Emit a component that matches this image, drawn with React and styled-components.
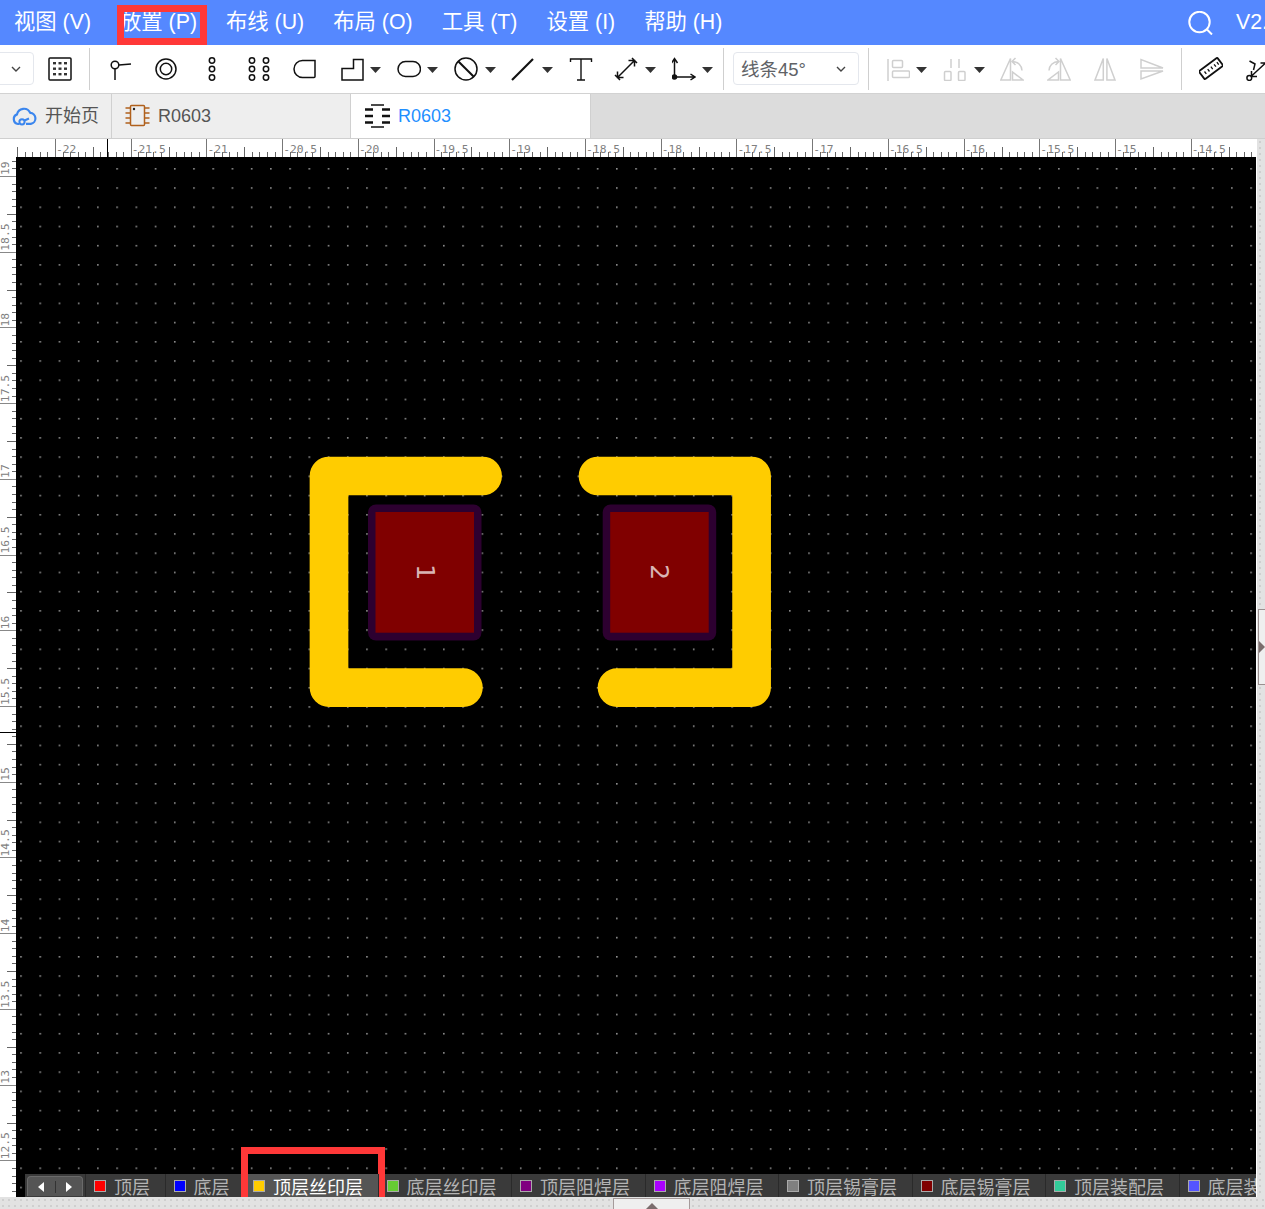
import React from 'react';
import styled, { createGlobalStyle } from 'styled-components';

const GlobalStyle = createGlobalStyle`
  html, body {
    margin: 0;
    padding: 0;
    background: #fff;
  }
  * {
    box-sizing: border-box;
  }
`;

const FONT = `"Liberation Sans", "Noto Sans CJK SC", sans-serif`;
const HIGHLIGHT = '#ff3838';

const Page = styled.div`
  width: 1265px;
  height: 1209px;
  display: flex;
  flex-direction: column;
  overflow: hidden;
  font-family: ${FONT};
`;

/* top menu */
const MenuBar = styled.div`
  height: 45px;
  flex: none;
  display: flex;
  align-items: center;
  gap: 29px;
  padding-left: 14px;
  background: #5588ff;
  color: #fff;
  font-size: 21.33px;
  overflow: hidden;
`;

const MenuItem = styled.div`
  position: relative;
  height: 45px;
  line-height: 44px;
  white-space: nowrap;

  ${(p) =>
    p.$marked &&
    `
    &::after {
      content: '';
      position: absolute;
      left: -3px;
      right: -10px;
      top: 5px;
      bottom: 0;
      border: 7px solid ${HIGHLIGHT};
    }
  `}
`;

const MenuRight = styled.div`
  margin-left: auto;
  width: 77px;
  flex: none;
  display: flex;
  align-items: center;
  gap: 22px;
  white-space: nowrap;
`;

const SearchIcon = styled.svg`
  width: 26px;
  height: 24px;
  flex: none;
  fill: none;
  stroke: #fff;
  stroke-width: 2;
`;

/* toolbar */
const Toolbar = styled.div`
  height: 49px;
  flex: none;
  display: flex;
  align-items: center;
  padding-bottom: 1px;
  border-bottom: 1px solid #d2d2d2;
  background: #fff;
  overflow: hidden;
`;

const Select = styled.div`
  flex: none;
  width: ${(p) => p.$width}px;
  height: 33px;
  margin-left: ${(p) => p.$gap}px;
  padding: 0 11px 0 7px;
  display: flex;
  align-items: center;
  justify-content: space-between;
  border: 1px solid #e4e7ed;
  border-radius: 4px;
  color: #606266;
  font-size: 18.5px;
  line-height: 1;
`;

const SelectText = styled.span`
  padding-top: 4px;
`;

const Chevron = styled.svg`
  width: 12px;
  height: 12px;
  flex: none;
  fill: none;
  stroke: #444;
  stroke-width: 1.4;
`;

const Sep = styled.div`
  flex: none;
  width: 1px;
  height: 42px;
  margin-left: ${(p) => p.$gap}px;
  background: #cfcfcf;
`;

const Tool = styled.svg`
  flex: none;
  width: 24px;
  height: 24px;
  margin-left: ${(p) => p.$gap}px;
  fill: none;
  stroke: ${(p) => (p.$off ? '#cfcfcf' : '#111')};
  stroke-width: 1.5;
  overflow: hidden;
`;

const Caret = styled.div`
  flex: none;
  width: 11px;
  height: 6px;
  margin-left: ${(p) => p.$gap}px;
  margin-top: 3px;
  background: #333;
  clip-path: polygon(0 0, 100% 0, 50% 100%);
`;

/* document tabs */
const TabBar = styled.div`
  height: 45px;
  flex: none;
  display: flex;
  border-bottom: 1px solid #cfcfcf;
  background: #dcdcdc;
`;

const Tab = styled.div`
  width: ${(p) => p.$width}px;
  flex: none;
  display: flex;
  align-items: center;
  gap: 8px;
  padding-left: ${(p) => p.$pad}px;
  border-right: 1px solid #d0d0d0;
  background: ${(p) => (p.$active ? '#fff' : '#eeeeee')};
  color: ${(p) => (p.$active ? '#1f8fff' : '#555')};
  font-size: 18px;
  line-height: 1;
`;

const TabIcon = styled.svg`
  flex: none;
  width: 25px;
  height: 24px;
  fill: none;
`;

/* editor area */
const Editor = styled.div`
  flex: 1;
  min-height: 0;
  display: flex;
`;

const EditorMain = styled.div`
  width: 1256px;
  flex: none;
  display: flex;
  flex-direction: column;
`;

const HRuler = styled.svg`
  display: block;
  flex: none;
  width: 1256px;
  height: 18px;
  background: #fff;
`;

const EditorBody = styled.div`
  flex: 1;
  min-height: 0;
  display: flex;
`;

const VRuler = styled.svg`
  display: block;
  flex: none;
  width: 16px;
  height: 1040px;
  background: #fff;
`;

const RulerLabel = styled.text`
  font-family: "DejaVu Sans Mono", monospace;
  font-size: 11.3px;
  fill: #808080;
`;

const CanvasWrap = styled.div`
  position: relative;
  flex: 1;
  min-width: 0;
  background: #000;
`;

const Board = styled.svg`
  display: block;
  width: 1240px;
  height: 1040px;
`;

const PadLabel = styled.text`
  font-family: "DejaVu Sans", sans-serif;
  font-size: 25.5px;
  fill: #d9b4b4;
`;

const dotted = `
  background-color: #e2e2e2;
  background-image: radial-gradient(#cfcfcf 1px, transparent 1.2px);
  background-size: 6px 6px;
`;

const SideStrip = styled.div`
  position: relative;
  flex: none;
  width: 9px;
  border-left: 1px solid #fff;
  ${dotted}
`;

const SideHandle = styled.div`
  position: absolute;
  left: 1px;
  right: 0;
  top: 470px;
  height: 76px;
  display: flex;
  align-items: center;
  background: #efefef;
  border: 1px solid #9a8f8f;
  border-right: none;

  &::after {
    content: '';
    border-top: 6px solid transparent;
    border-bottom: 6px solid transparent;
    border-left: 6px solid #7b6d6d;
  }
`;

const BottomStrip = styled.div`
  position: relative;
  height: 12px;
  flex: none;
  ${dotted}
`;

const BottomHandle = styled.div`
  position: absolute;
  left: 613px;
  top: 1px;
  width: 77px;
  height: 11px;
  display: flex;
  align-items: flex-end;
  justify-content: center;
  background: #efefef;
  border: 1px solid #a59b9b;
  border-bottom: none;

  &::after {
    content: '';
    border-left: 6px solid transparent;
    border-right: 6px solid transparent;
    border-bottom: 6px solid #7b6d6d;
  }
`;

/* layer tabs lie over the canvas */
const LayerBar = styled.div`
  position: absolute;
  left: 9px;
  right: 0;
  bottom: 0;
  height: 23px;
  display: flex;
  background: #3a3a3a;
`;

const LayerNav = styled.div`
  flex: none;
  width: 56px;
  height: 20px;
  margin: 2px 2px 0 2px;
  display: flex;
  align-items: center;
  background: #555;
  border: 1px solid #6a6a6a;
  border-bottom: none;
  border-radius: 4px 4px 0 0;
`;

const NavButton = styled.div`
  flex: 1;
  height: 12px;
  display: flex;
  align-items: center;
  justify-content: center;
  border-left: ${(p) => (p.$divider ? '1px solid #333' : 'none')};

  &::after {
    content: '';
    border-top: 5px solid transparent;
    border-bottom: 5px solid transparent;
    ${(p) => (p.$right ? 'border-left: 6px solid #fff;' : 'border-right: 6px solid #fff;')}
  }
`;

const LayerTab = styled.div`
  position: relative;
  flex: ${(p) => (p.$clip ? '1 1 0' : 'none')};
  min-width: 0;
  display: flex;
  align-items: center;
  gap: 8px;
  padding: 0 14.5px 0 8px;
  border-left: 1px solid ${(p) => (p.$active ? '#555' : '#2a2a2a')};
  background: ${(p) => (p.$active ? '#555' : 'transparent')};
  color: ${(p) => (p.$active ? '#fff' : '#b4b4b4')};
  font-size: 18px;
  white-space: nowrap;
  overflow: ${(p) => (p.$clip ? 'hidden' : 'visible')};

  ${(p) =>
    p.$active &&
    `
    &::before {
      content: '';
      position: absolute;
      left: 3px;
      right: 0;
      bottom: -2px;
      height: 2px;
      background: #bdbdbd;
    }
    &::after {
      content: '';
      position: absolute;
      left: -4px;
      right: -7px;
      top: -27px;
      bottom: -9px;
      border: 7px solid ${HIGHLIGHT};
    }
  `}
`;

const Swatch = styled.span`
  flex: none;
  width: 12px;
  height: 12px;
  border: 1px solid #aaa;
  background: ${(p) => p.$color};
`;

const MENU = ['视图 (V)', '放置 (P)', '布线 (U)', '布局 (O)', '工具 (T)', '设置 (I)', '帮助 (H)'];

const LAYERS = [
  ['顶层', '#ff0000'],
  ['底层', '#0000ff'],
  ['顶层丝印层', '#ffcc00', true],
  ['底层丝印层', '#66cc33'],
  ['顶层阻焊层', '#800080'],
  ['底层阻焊层', '#aa00ff'],
  ['顶层锡膏层', '#808080'],
  ['底层锡膏层', '#800000'],
  ['顶层装配层', '#33cc99'],
  ['底层装配层', '#5555ff'],
];

const gridDots = [5, 10.5, 16].flatMap((y) =>
  [5, 10.5, 16].map((x) => <rect key={`${x}-${y}`} x={x} y={y} width="3" height="2.4" fill="#333" stroke="none" />),
);

const TOOLS_LEFT = [
  { gap: 18, body: <><circle cx="7" cy="8" r="3.8" /><path d="M7 12V23M11 8L23 7" /></> },
  { gap: 22, body: <><circle cx="12" cy="12" r="10" /><circle cx="12" cy="12" r="5.7" /></> },
  { gap: 22, body: <><circle cx="12" cy="3.5" r="2.7" /><circle cx="12" cy="12" r="2.7" /><circle cx="12" cy="20.5" r="2.7" /></> },
  {
    gap: 23,
    body: (
      <>
        <circle cx="5" cy="3.5" r="2.7" /><circle cx="5" cy="12" r="2.7" /><circle cx="5" cy="20.5" r="2.7" />
        <circle cx="19" cy="3.5" r="2.7" /><circle cx="19" cy="12" r="2.7" /><circle cx="19" cy="20.5" r="2.7" />
      </>
    ),
  },
  { gap: 22, body: <path d="M22 3.5V19.5a1 1 0 0 1-1 1H9.5a8.5 8.5 0 0 1 0-17z" /> },
  { gap: 23, caret: 6, body: <path d="M13.5 2.5H23V23H2V11.5H13.5z" /> },
  { gap: 16, caret: 6, body: <rect x="1" y="4.5" width="22.5" height="15" rx="7.5" /> },
  { gap: 16, caret: 7, body: <><circle cx="12" cy="12" r="11" /><path d="M4.2 4.2L19.8 19.8" strokeWidth="2" /></> },
  { gap: 15, caret: 7, body: <path d="M1 23L22 2" strokeWidth="2.2" /> },
  { gap: 16, body: <path d="M1.5 5V2H22.5V5M12 2V23M8 23H16" strokeWidth="1.4" /> },
  {
    gap: 21,
    caret: 7,
    body: <path d="M3.5 20.5L20.5 3.5M3.5 14.5V20.5H9.5M14.5 3.5H20.5V9.5M1 18L6 23M18 1L23 6" strokeWidth="1.5" />,
  },
  {
    gap: 16,
    caret: 6,
    body: (
      <>
        <path d="M2.5 20V1.5M-0.5 6L2.5 1.5L5.5 6M2.5 20H23M18.5 17L23 20L18.5 23" strokeWidth="1.5" />
        <circle cx="2.5" cy="20" r="2" fill="#111" />
      </>
    ),
  },
];

const triangleFlip = (
  <>
    <path d="M0.8 23H10.5V1.5z" />
    <path d="M12.5 23H23L12.5 15z" />
    <path d="M12.5 4.5C18 4.5 22 9 22 13.5M15.5 1L12 4.5L15.5 8" />
  </>
);

const TOOLS_RIGHT = [
  {
    gap: 17,
    caret: 6,
    body: <><path d="M2 2V24" /><rect x="6.5" y="3.5" width="10" height="7" rx="1" /><rect x="6.5" y="14" width="17" height="6.5" rx="1" /></>,
  },
  {
    gap: 16,
    caret: 7,
    body: <><path d="M8 2V11M16 2V11" /><rect x="1.5" y="14.5" width="6.5" height="9" rx="1" /><rect x="15.5" y="14.5" width="6.5" height="9" rx="1" /></>,
  },
  { gap: 15, body: triangleFlip },
  { gap: 23, body: <g transform="matrix(-1 0 0 1 24 0)">{triangleFlip}</g> },
  { gap: 22, body: <path d="M2 23H10.3V1.5zM13.9 1.5V23H22z" /> },
  { gap: 23, body: <path d="M1 2.5V11H23zM1 14H23L1 22z" /> },
];

const RULER_STEP = 7.572;
const H_TICKS = Array.from({ length: 165 }, (_, k) => k - 5);
const V_TICKS = Array.from({ length: 139 }, (_, k) => k - 2);

const tickSize = (i, major, medium, small) => {
  if (i % 10 === 0) return major;
  if (i % 5 === 0) return medium;
  return small;
};

const Rect = styled.rect`
  fill: ${(p) => p.$fill};
`;

const HRulerView = () => (
  <HRuler shapeRendering="crispEdges">
    {H_TICKS.map((i) => {
      const x = Math.round(55 + i * RULER_STEP);
      const len = tickSize(i, 18, 10, 5);
      return <Rect key={i} x={x} y={18 - len} width="1" height={len} $fill={i % 10 === 0 ? '#777' : '#666'} />;
    })}
    {H_TICKS.filter((i) => i >= 0 && i % 10 === 0).map((i) => (
      <RulerLabel key={i} x={55 + i * RULER_STEP + 1} y="14" shapeRendering="auto">
        {-22 + i / 20}
      </RulerLabel>
    ))}
    <Rect x="107" y="0" width="1" height="18" $fill="#000" />
  </HRuler>
);

const VRulerView = () => (
  <VRuler shapeRendering="crispEdges">
    {V_TICKS.map((i) => {
      const y = Math.round(19 + i * RULER_STEP);
      const len = tickSize(i, 16, 9, 4);
      return <Rect key={i} x={16 - len} y={y} width={len} height="1" $fill={i % 10 === 0 ? '#888' : '#666'} />;
    })}
    {V_TICKS.filter((i) => i >= 0 && i % 10 === 0).map((i) => (
      <RulerLabel key={i} transform={`translate(8.5 ${19 + i * RULER_STEP - 1}) rotate(-90)`} shapeRendering="auto">
        {19 - i / 20}
      </RulerLabel>
    ))}
    <Rect x="0" y="575" width="16" height="1" $fill="#000" />
  </VRuler>
);

const Pad = ({ x, label }) => (
  <>
    <rect x={x} y="504.5" width="113.5" height="136" rx="8" fill="#2d0030" />
    <rect x={x + 7.5} y="512" width="98.5" height="120.7" fill="#800000" />
    <PadLabel transform={`translate(${x + 48.5} 572) rotate(90)`} textAnchor="middle">
      {label}
    </PadLabel>
  </>
);

const BoardView = () => (
  <Board viewBox="16 157 1240 1040">
    <defs>
      <pattern id="grid" x="20.2" y="168" width="19.22" height="19.22" patternUnits="userSpaceOnUse">
        <rect width="1.6" height="1.6" fill="#909090" />
      </pattern>
    </defs>
    <rect x="16" y="157" width="1240" height="1040" fill="url(#grid)" />
    <g fill="none" stroke="#ffcc00" strokeWidth="38.7" strokeLinecap="round" strokeLinejoin="round">
      <path d="M482.6 476H329V687.6H463.4" />
      <path d="M598 476H751.6V687.6H617" />
    </g>
    <Pad x={368} label="1" />
    <Pad x={602.7} label="2" />
  </Board>
);

const renderTool = (t, key) => (
  <React.Fragment key={key}>
    <Tool viewBox="0 0 24 24" $gap={t.gap} $off={t.off}>
      {t.body}
    </Tool>
    {t.caret !== undefined && <Caret $gap={t.caret} />}
  </React.Fragment>
);

const ChevronDown = () => (
  <Chevron viewBox="0 0 12 12">
    <path d="M2 4L6 8L10 4" />
  </Chevron>
);

const App = () => (
  <Page>
    <GlobalStyle />
    <MenuBar>
      {MENU.map((m, i) => (
        <MenuItem key={m} $marked={i === 1}>
          {m}
        </MenuItem>
      ))}
      <MenuRight>
        <SearchIcon viewBox="0 0 26 24">
          <circle cx="11.5" cy="11" r="10.2" />
          <path d="M19 18.5L24 23.5" />
        </SearchIcon>
        <span>V2.2</span>
      </MenuRight>
    </MenuBar>

    <Toolbar>
      <Select $width={50} $gap={-16}>
        <span />
        <ChevronDown />
      </Select>
      <Tool viewBox="0 0 24 24" $gap={14}>
        <rect x="1" y="1" width="22" height="22" rx="1" />
        {gridDots}
      </Tool>
      <Sep $gap={17} />
      {TOOLS_LEFT.map(renderTool)}
      <Sep $gap={10} />
      <Select $width={126} $gap={9}>
        <SelectText>线条45°</SelectText>
        <ChevronDown />
      </Select>
      <Sep $gap={9} />
      {TOOLS_RIGHT.map((t, i) => renderTool({ ...t, off: true }, i))}
      <Sep $gap={17} />
      <Tool viewBox="0 0 24 24" $gap={17}>
        <g transform="rotate(-37 12 11.5)">
          <rect x="0.5" y="6.5" width="23" height="10" rx="1" strokeWidth="1.8" />
          <path d="M5 10V13M9 10V13M13 10V13M17 10V13M20.5 10V13" strokeWidth="1.3" />
        </g>
      </Tool>
      <Tool viewBox="0 0 24 24" $gap={23}>
        <circle cx="3.3" cy="21" r="2.4" />
        <path d="M5 19.5L19 6.5M14.5 6H20V11.5M5.5 14V19.5H11M3.5 4L9 7L7.5 13" />
      </Tool>
    </Toolbar>

    <TabBar>
      <Tab $width={112} $pad={12}>
        <TabIcon viewBox="0 0 25 24" stroke="#3b86ee" strokeWidth="2.2">
          <path d="M7.5 20H6a5 5 0 0 1-1-9.6a7 7 0 0 1 13.2-1.6a5.6 5.6 0 0 1 .6 11.1H14" />
          <circle cx="10" cy="17.8" r="2.6" strokeWidth="2" />
          <path d="M12.5 16.5L17 14.5" strokeWidth="2" />
        </TabIcon>
        <span>开始页</span>
      </Tab>
      <Tab $width={239} $pad={13}>
        <TabIcon viewBox="0 0 25 24" stroke="#b0601c" strokeWidth="1.5">
          <rect x="5.5" y="1.5" width="14" height="20" rx="1" />
          <path d="M0.5 4H5.5M0.5 9H5.5M0.5 14H5.5M0.5 19H5.5M19.5 4H24.5M19.5 9H24.5M19.5 14H24.5M19.5 19H24.5" />
          <circle cx="9" cy="5" r="1.2" fill="#222" stroke="none" />
        </TabIcon>
        <span>R0603</span>
      </Tab>
      <Tab $width={240} $pad={14} $active>
        <TabIcon viewBox="0 0 25 24" stroke="#111">
          <path d="M6 1H19M6 23H19" strokeWidth="1.5" />
          <path d="M0 5.5H8M0 12H8M0 18.5H8M17 5.5H25M17 12H25M17 18.5H25" strokeWidth="2.6" />
        </TabIcon>
        <span>R0603</span>
      </Tab>
    </TabBar>

    <Editor>
      <EditorMain>
        <HRulerView />
        <EditorBody>
          <VRulerView />
          <CanvasWrap>
            <BoardView />
            <LayerBar>
              <LayerNav>
                <NavButton />
                <NavButton $right $divider />
              </LayerNav>
              {LAYERS.map(([name, color, active], i) => (
                <LayerTab key={name} $active={active} $clip={i === LAYERS.length - 1}>
                  <Swatch $color={color} />
                  {name}
                </LayerTab>
              ))}
            </LayerBar>
          </CanvasWrap>
        </EditorBody>
      </EditorMain>
      <SideStrip>
        <SideHandle />
      </SideStrip>
    </Editor>
    <BottomStrip>
      <BottomHandle />
    </BottomStrip>
  </Page>
);

export default App;
